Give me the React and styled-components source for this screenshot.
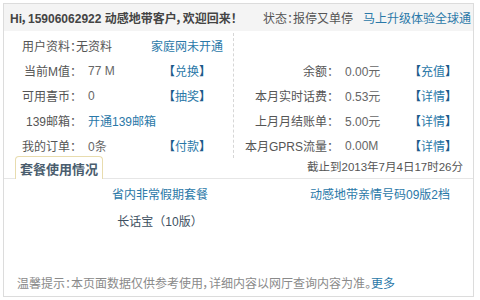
import React from 'react'
import styled, { createGlobalStyle } from 'styled-components'

const Global = createGlobalStyle`
  body {
    margin: 0;
    background: #fff;
    font-family: "Liberation Sans", "Noto Sans CJK SC", sans-serif;
    font-size: 12px;
    color: #555;
  }
`

const Frame = styled.div`
  margin: 3px 6px 3px 3px;
  height: 292px;
  border: 1px solid #dcdcdc;
  display: flex;
  flex-direction: column;
  background: #fff;
`

const Header = styled.div`
  height: 27px;
  background: #f4f4f4;
  display: flex;
  align-items: center;
  justify-content: space-between;
  padding: 0 2px 0 6px;
`

const Greeting = styled.span`
  font-weight: bold;
  color: #444;
  font-size: 12px;
  font-feature-settings: "palt";
`

const Status = styled.div`
  display: flex;
  gap: 10px;
  color: #555;
  font-feature-settings: "palt";
`

const Link = styled.a`
  color: ${p => p.$dark ? '#3d4f60' : '#2a78a8'};
  text-decoration: none;
  cursor: pointer;
`

const Info = styled.div`
  display: flex;
  padding-top: 2px;
`

const Half = styled.div`
  display: grid;
  grid-template-columns: ${p => p.$cols};
  grid-auto-rows: 25px;
  align-items: center;
  width: ${p => p.$width}px;
  border-right: ${p => p.$divider ? '1px dashed #d6d6d6' : 'none'};
`

const Label = styled.span`
  text-align: ${p => p.$wide ? 'left' : 'right'};
  padding-left: ${p => p.$wide ? '18px' : '0'};
  grid-column: ${p => p.$wide ? 'span 2' : 'auto'};
  font-feature-settings: ${p => p.$wide ? '"palt"' : 'normal'};
  white-space: nowrap;
  color: #555;
`

const Value = styled.span`
  color: #666;
  white-space: nowrap;
`

const Action = styled.span`
  text-align: center;
  white-space: nowrap;
  color: #2a78a8;
`

const Bracket = styled.b`
  color: #1c5a8a;
`

const TabBar = styled.div`
  height: 23px;
  margin-top: -3px;
  border-bottom: 1px solid #e6e6e6;
  display: flex;
  align-items: flex-end;
  justify-content: space-between;
  padding: 0 10px 0 11px;
`

const Tab = styled.div`
  height: 22px;
  padding: 0 4px;
  border: 1px solid #e8dcae;
  border-bottom: none;
  border-radius: 4px 4px 0 0;
  background: #fff;
  margin-bottom: -1px;
  font-size: 13px;
  font-weight: bold;
  color: #4a5d6e;
  display: flex;
  align-items: center;
`

const Stamp = styled.span`
  color: #555;
  font-size: 11.5px;
  line-height: 22px;
`

const Packages = styled.div`
  display: grid;
  grid-template-columns: 216px 1fr;
  grid-auto-rows: 27px;
  align-items: center;
  padding: 1px 0 0 48px;
`

const Pkg = styled.span`
  text-align: ${p => p.$left ? 'left' : 'center'};
  padding-left: ${p => p.$left ? '42px' : '0'};
  white-space: nowrap;
`

const Footer = styled.div`
  margin-top: auto;
  padding: 0 0 4px 13px;
  color: #8a8a8a;
  line-height: 16px;
  font-feature-settings: "palt";
`

const Act = ({ children }) => (
  <Action><Bracket>【</Bracket>{children}<Bracket>】</Bracket></Action>
)

export default function App() {
  return (
    <>
      <Global />
      <Frame>
        <Header>
          <Greeting>Hi，15906062922 动感地带客户，欢迎回来！</Greeting>
          <Status>
            <span>状态：报停又单停</span>
            <Link>马上升级体验全球通</Link>
          </Status>
        </Header>
        <Info>
          <Half $width={229} $divider $cols="78px 6px 62px 74px">
            <Label $wide>用户资料：无资料</Label><span /><Action><Link>家庭网未开通</Link></Action>
            <Label>当前M值：</Label><span /><Value>77 M</Value><Act>兑换</Act>
            <Label>可用喜币：</Label><span /><Value>0</Value><Act>抽奖</Act>
            <Label>139邮箱：</Label><span /><Value><Link>开通139邮箱</Link></Value><span />
            <Label>我的订单：</Label><span /><Value>0条</Value><Act>付款</Act>
          </Half>
          <Half $width={239} $cols="105px 6px 55px 66px">
            <span /><span /><span /><span />
            <Label>余额：</Label><span /><Value>0.00元</Value><Act>充值</Act>
            <Label>本月实时话费：</Label><span /><Value>0.53元</Value><Act>详情</Act>
            <Label>上月月结账单：</Label><span /><Value>5.00元</Value><Act>详情</Act>
            <Label>本月GPRS流量：</Label><span /><Value>0.00M</Value><Act>详情</Act>
          </Half>
        </Info>
        <TabBar>
          <Tab>套餐使用情况</Tab>
          <Stamp>截止到2013年7月4日17时26分</Stamp>
        </TabBar>
        <Packages>
          <Pkg><Link>省内非常假期套餐</Link></Pkg>
          <Pkg $left><Link>动感地带亲情号码09版2档</Link></Pkg>
          <Pkg><Link $dark>长话宝（10版）</Link></Pkg>
        </Packages>
        <Footer>
          温馨提示：本页面数据仅供参考使用，详细内容以网厅查询内容为准。<Link>更多</Link>
        </Footer>
      </Frame>
    </>
  )
}
